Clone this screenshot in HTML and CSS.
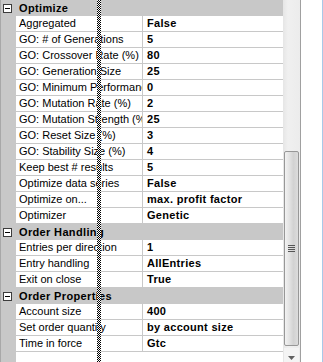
FILE: index.html
```html
<!DOCTYPE html>
<html>
<head>
    <meta charset="UTF-8">
    <link rel="stylesheet" href="styles.css">
</head>
<body>
    <div class="window">
        <div class="grid">
            <div class="category">
                <span class="toggle"></span>
                <span class="category-name">Optimize</span>
            </div>
            <div class="prop"><span class="gutter"></span><span class="prop-name">Aggregated</span><span class="prop-value">False</span></div>
            <div class="prop"><span class="gutter"></span><span class="prop-name">GO: # of Generations</span><span class="prop-value">5</span></div>
            <div class="prop"><span class="gutter"></span><span class="prop-name">GO: Crossover Rate (%)</span><span class="prop-value">80</span></div>
            <div class="prop"><span class="gutter"></span><span class="prop-name">GO: Generation Size</span><span class="prop-value">25</span></div>
            <div class="prop"><span class="gutter"></span><span class="prop-name">GO: Minimum Performance</span><span class="prop-value">0</span></div>
            <div class="prop"><span class="gutter"></span><span class="prop-name">GO: Mutation Rate (%)</span><span class="prop-value">2</span></div>
            <div class="prop"><span class="gutter"></span><span class="prop-name">GO: Mutation Strength (%)</span><span class="prop-value">25</span></div>
            <div class="prop"><span class="gutter"></span><span class="prop-name">GO: Reset Size (%)</span><span class="prop-value">3</span></div>
            <div class="prop"><span class="gutter"></span><span class="prop-name">GO: Stability Size (%)</span><span class="prop-value">4</span></div>
            <div class="prop"><span class="gutter"></span><span class="prop-name">Keep best # results</span><span class="prop-value">5</span></div>
            <div class="prop"><span class="gutter"></span><span class="prop-name">Optimize data series</span><span class="prop-value">False</span></div>
            <div class="prop"><span class="gutter"></span><span class="prop-name">Optimize on...</span><span class="prop-value">max. profit factor</span></div>
            <div class="prop"><span class="gutter"></span><span class="prop-name">Optimizer</span><span class="prop-value">Genetic</span></div>
            <div class="category">
                <span class="toggle"></span>
                <span class="category-name">Order Handling</span>
            </div>
            <div class="prop"><span class="gutter"></span><span class="prop-name">Entries per direction</span><span class="prop-value">1</span></div>
            <div class="prop"><span class="gutter"></span><span class="prop-name">Entry handling</span><span class="prop-value">AllEntries</span></div>
            <div class="prop"><span class="gutter"></span><span class="prop-name">Exit on close</span><span class="prop-value">True</span></div>
            <div class="category">
                <span class="toggle"></span>
                <span class="category-name">Order Properties</span>
            </div>
            <div class="prop"><span class="gutter"></span><span class="prop-name">Account size</span><span class="prop-value">400</span></div>
            <div class="prop"><span class="gutter"></span><span class="prop-name">Set order quantity</span><span class="prop-value">by account size</span></div>
            <div class="prop"><span class="gutter"></span><span class="prop-name">Time in force</span><span class="prop-value">Gtc</span></div>
            <div class="grid-rest"><span class="gutter"></span></div>
        </div>

        <div class="scrollbar">
            <div class="track-top"></div>
            <div class="thumb"><span class="gripper"></span></div>
            <div class="arrow-down">
                <svg width="7" height="4" viewBox="0 0 7 4"><path d="M0 0h7L3.5 4z" fill="#606060"/></svg>
            </div>
        </div>

        <div class="side"></div>

        <!-- splitter being dragged -->
        <div class="drag-line"></div>
    </div>
</body>
</html>
```

FILE: styles.css
```css
body {
    margin: 0;
    font-family: "Liberation Sans", Arial, sans-serif;
    font-size: 11px;
    color: #000;
    background: #fff;
}

.window {
    position: relative;
    display: flex;
    width: 323px;
    height: 362px;
    overflow: hidden;
}

.grid {
    width: 283px;
    display: flex;
    flex-direction: column;
    flex-shrink: 0;
}

/* Category header rows */
.category {
    display: flex;
    align-items: center;
    height: 16px;
    background-color: #c8c8c8;
    border-left: 1px solid #a8a8a8;
}

.toggle {
    position: relative;
    width: 7px;
    height: 7px;
    margin-left: 2px;
    border: 1px solid #3c3c3c;
    background: #fff;
}

.toggle:before {
    content: "";
    position: absolute;
    left: 1px;
    top: 3px;
    width: 5px;
    height: 1px;
    background: #000;
}

.category-name {
    margin-left: 7px;
    font-weight: bold;
    letter-spacing: 0.35px;
    white-space: nowrap;
    line-height: 16px;
}

/* Property rows */
.prop {
    display: flex;
    height: 16px;
}

.gutter {
    width: 15px;
    flex-shrink: 0;
    background-color: #c8c8c8;
    border-left: 1px solid #a8a8a8;
}

.prop-name,
.prop-value {
    height: 15px;
    line-height: 15px;
    border-bottom: 1px solid #c8c8c8;
    white-space: nowrap;
    overflow: hidden;
}

.prop-name {
    width: 123px;
    padding-left: 3px;
    border-right: 1px solid #c8c8c8;
    flex-shrink: 0;
}

.prop-value {
    flex: 1;
    padding-left: 4px;
    font-weight: bold;
    letter-spacing: 0.3px;
}

.grid-rest {
    display: flex;
    flex: 1;
}

/* Vertical scrollbar */
.scrollbar {
    width: 17px;
    flex-shrink: 0;
    display: flex;
    flex-direction: column;
    align-items: center;
    background: linear-gradient(to right, #e6e6e6, #f0f0f0 30%, #ececec);
    border-right: 1px solid #a0a0a0;
}

.track-top {
    height: 151px;
    flex-shrink: 0;
}

.thumb {
    width: 13px;
    height: 193px;
    flex-shrink: 0;
    display: flex;
    align-items: center;
    justify-content: center;
    border: 1px solid #979797;
    border-radius: 2px;
    background: linear-gradient(to right, #f2f2f2, #e2e2e2 35%, #d2d2d2 65%, #dcdcdc);
}

.gripper {
    width: 7px;
    height: 7px;
    background: repeating-linear-gradient(to bottom, #555 0 1px, transparent 1px 2px);
}

.arrow-down {
    width: 15px;
    height: 17px;
    margin-top: 2px;
    flex-shrink: 0;
    display: flex;
    justify-content: center;
    padding-top: 8px;
    box-sizing: border-box;
    background: #f4f4f4;
}

.arrow-down svg {
    display: block;
}

.side {
    flex: 1;
    background: #fff;
    border-right: 1px solid #a9c8e8;
}

.drag-line {
    position: absolute;
    left: 97px;
    top: 0;
    width: 4px;
    height: 362px;
    background: repeating-conic-gradient(#000 0 25%, #fff 0 50%) 0 0 / 2px 2px;
}
```
